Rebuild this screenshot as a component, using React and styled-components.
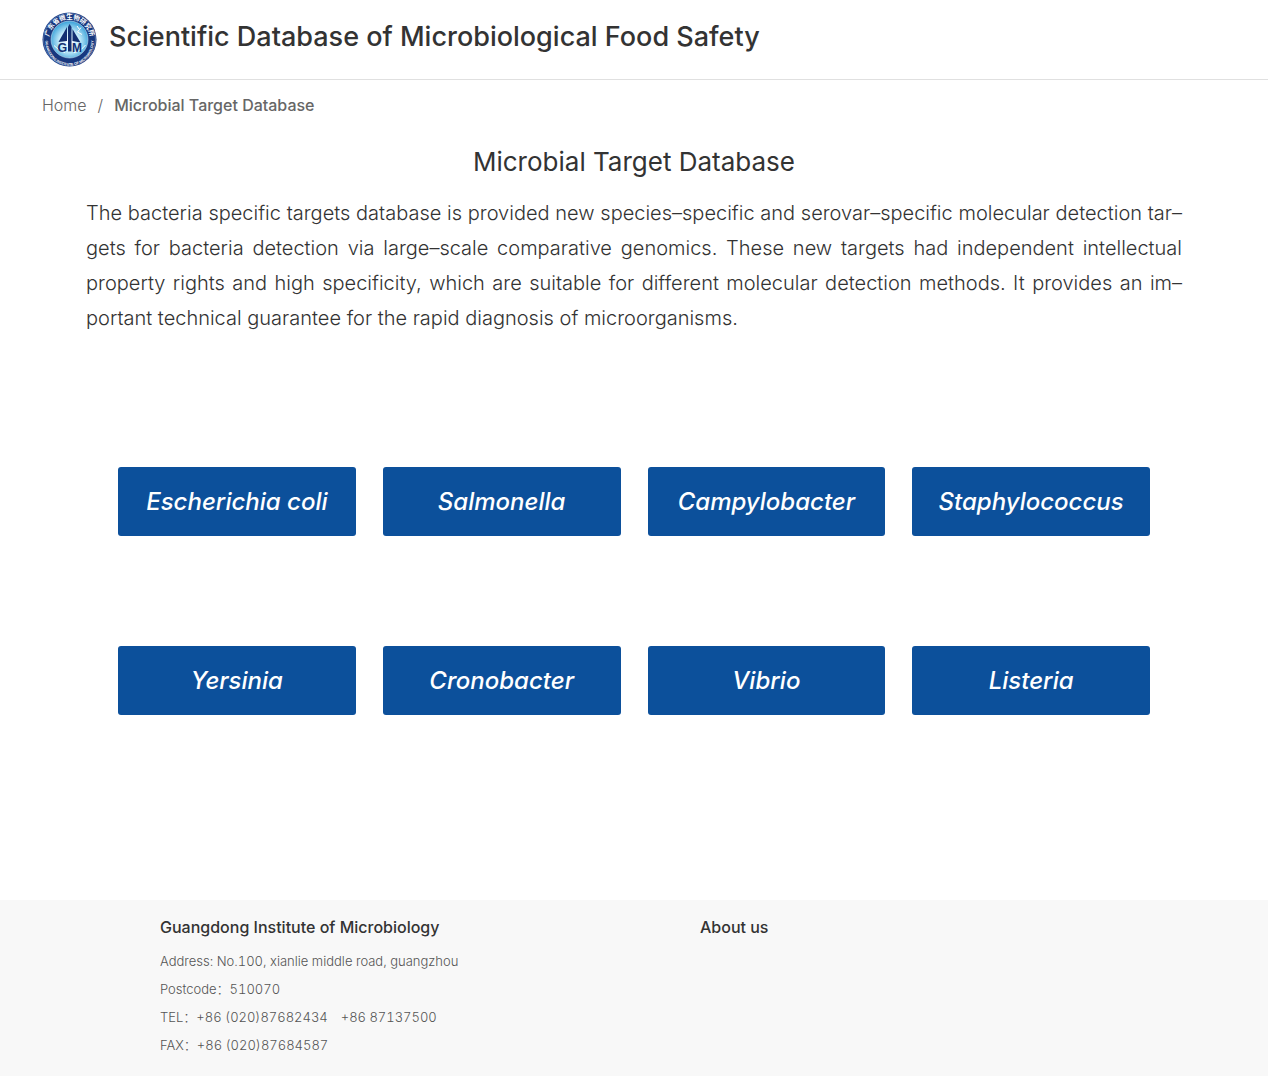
import React from 'react';
import styled, { createGlobalStyle } from 'styled-components';

const GlobalStyle = createGlobalStyle`
  * {
    box-sizing: border-box;
  }

  body {
    margin: 0;
    background: #fff;
    color: #333;
    font-family: Inter, 'Noto Sans CJK SC', sans-serif;
  }

  h1, h2, h3, p, ul, ol {
    margin: 0;
    padding: 0;
  }

  a {
    color: inherit;
    text-decoration: none;
  }
`;

const Page = styled.div`
  display: flex;
  flex-direction: column;
  min-height: 100vh;
`;

const Header = styled.header`
  display: flex;
  align-items: center;
  gap: 12px;
  height: 80px;
  padding: 0 42px;
  border-bottom: 1px solid #e0e0e0;
`;

const SiteName = styled.h1`
  padding-bottom: 6px;
  font-size: 27px;
  font-weight: 500;
  line-height: 36px;
`;

const Breadcrumb = styled.nav`
  padding: 12px 42px;
  color: #666;
  font-size: 16px;
  font-weight: 300;
  line-height: 26px;

  ol {
    display: flex;
    list-style: none;
  }

  li + li::before {
    content: '/';
    margin: 0 11px;
    font-weight: 300;
  }

  [aria-current] {
    font-weight: 500;
  }
`;

const Main = styled.main`
  flex: 1;
  padding: 14px 86px 0;
`;

const PageTitle = styled.h2`
  font-size: 26px;
  font-weight: 400;
  line-height: 36px;
  text-align: center;
`;

const Intro = styled.p`
  margin-top: 16px;
  font-size: 20px;
  font-weight: 300;
  line-height: 35px;
  text-align: justify;
  hyphens: manual;
  hyphenate-character: '–';
`;

const TargetGrid = styled.ul`
  display: grid;
  grid-template-columns: repeat(4, 1fr);
  gap: 110px 27px;
  margin: 131px 32px 0;
  list-style: none;
`;

const TargetLink = styled.a`
  display: flex;
  align-items: center;
  justify-content: center;
  height: 69px;
  border-radius: 3px;
  background: #0c509b;
  color: #fff;
  font-size: 24px;
  font-style: italic;
  font-weight: 500;

  &:hover {
    background: #0a4484;
  }
`;

const Footer = styled.footer`
  display: grid;
  grid-template-columns: 540px 1fr;
  padding: 14px 160px 17px;
  background: #f8f8f8;
`;

const FooterTitle = styled.h3`
  margin-bottom: 7px;
  font-size: 16px;
  font-weight: 500;
  line-height: 26px;
`;

const FooterLine = styled.p`
  color: #555;
  font-size: 13px;
  font-weight: 300;
  font-variant-numeric: tabular-nums;
  line-height: 28px;
  white-space: pre-wrap;
`;

const targets = [
  'Escherichia coli',
  'Salmonella',
  'Campylobacter',
  'Staphylococcus',
  'Yersinia',
  'Cronobacter',
  'Vibrio',
  'Listeria',
];

const contacts = [
  'Address: No.100, xianlie middle road, guangzhou',
  'Postcode：510070',
  'TEL：+86 (020)87682434\u2003+86 87137500',
  'FAX：+86 (020)87684587',
];

const Logo = () => (
  <svg width="55" height="55" viewBox="0 0 110 110" role="img" aria-label="Guangdong Institute of Microbiology">
    <defs>
      <radialGradient id="globe" cx="50%" cy="55%" r="55%">
        <stop offset="0" stopColor="#fff" />
        <stop offset="0.5" stopColor="#c4ebfa" />
        <stop offset="1" stopColor="#359fd8" />
      </radialGradient>
      <path id="arcTop" d="M16 68 A41 41 0 1 1 94 68" />
      <path id="arcBottom" d="M7 59 A48 48 0 0 0 103 59" />
    </defs>
    <circle cx="55" cy="55" r="54" fill="#17387f" />
    <circle cx="55" cy="55" r="52" fill="none" stroke="#8fa5cf" strokeWidth="1" />
    <circle cx="55" cy="55" r="37" fill="url(#globe)" stroke="#dceefa" strokeWidth="1" />
    <path d="M70 28 l5 7 -4 5 9 5 M78 31 l-3 4 M24 67 q8 10 22 14 M87 66 q-9 12 -23 15" fill="none" stroke="#fff" strokeWidth="2" />
    <g fill="#122f72">
      <path d="M50 30 L50 58 L33 60 Z" />
      <path d="M55 24 L59 30 L59 79 L52 79 L52 30 Z" />
      <path d="M61 34 L77 61 L61 58 Z" />
    </g>
    <g fill="#122f72" fontFamily="Liberation Sans, sans-serif" fontWeight="700">
      <text x="31" y="79" fontSize="25">G</text>
      <text x="60" y="79" fontSize="24">M</text>
    </g>
    <g fill="#fff">
      <text fontFamily="'Noto Sans CJK SC', sans-serif" fontSize="13" fontWeight="700" textAnchor="middle">
        <textPath href="#arcTop" startOffset="50%">广东省微生物研究所</textPath>
      </text>
      <text fontFamily="Liberation Sans, sans-serif" fontSize="7" fontWeight="700" textAnchor="middle">
        <textPath href="#arcBottom" startOffset="50%">GUANGDONG INSTITUTE OF MICROBIOLOGY</textPath>
      </text>
    </g>
  </svg>
);

const App = () => {
  return (
    <Page>
      <GlobalStyle />
      <Header>
        <Logo />
        <SiteName>Scientific Database of Microbiological Food Safety</SiteName>
      </Header>

      <Breadcrumb aria-label="Breadcrumb">
        <ol>
          <li><a href="#home">Home</a></li>
          <li aria-current="page">Microbial Target Database</li>
        </ol>
      </Breadcrumb>

      <Main>
        <PageTitle>Microbial Target Database</PageTitle>
        <Intro>
          The bacteria specific targets database is provided new species–specific and
          serovar–specific molecular detection tar&shy;gets for bacteria detection via
          large–scale comparative genomics. These new targets had independent intellectual
          property rights and high specificity, which are suitable for different molecular
          detection methods. It provides an im&shy;portant technical guarantee for the rapid
          diagnosis of microorganisms.
        </Intro>
        <TargetGrid>
          {targets.map((name) => (
            <li key={name}>
              <TargetLink href={`#${name.toLowerCase().replace(' ', '-')}`}>{name}</TargetLink>
            </li>
          ))}
        </TargetGrid>
      </Main>

      <Footer>
        <div>
          <FooterTitle>Guangdong Institute of Microbiology</FooterTitle>
          {contacts.map((line) => (
            <FooterLine key={line}>{line}</FooterLine>
          ))}
        </div>
        <div>
          <FooterTitle><a href="#about">About us</a></FooterTitle>
        </div>
      </Footer>
    </Page>
  );
};

export default App;
